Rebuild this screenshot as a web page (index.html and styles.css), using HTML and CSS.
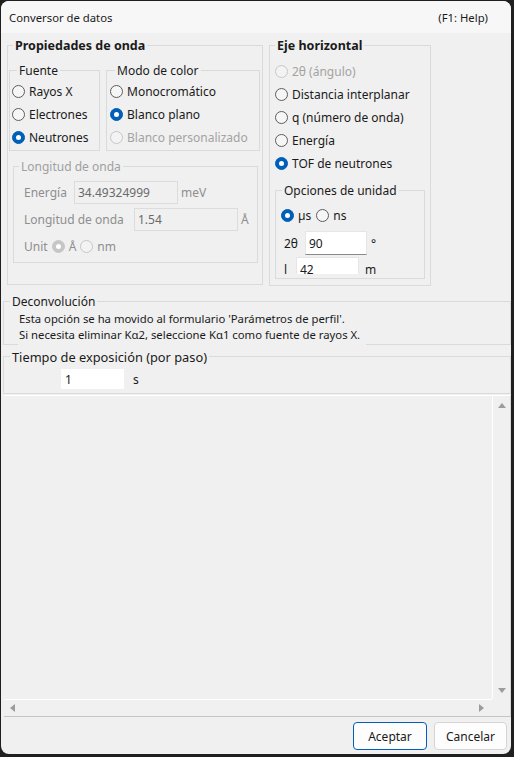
FILE: index.html
```html
<!DOCTYPE html>
<html lang="es">
<head>
    <meta charset="UTF-8">
    <meta name="viewport" content="width=device-width, initial-scale=1.0">
    <title>Conversor de datos</title>
    <link rel="stylesheet" href="styles.css">
</head>
<body>
    <div class="window">
        <header class="titlebar">
            <span>Conversor de datos</span>
            <span>(F1: Help)</span>
        </header>

        <main class="content">
            <div class="top">
                <section class="group wave">
                    <div class="legend bold">Propiedades de onda</div>
                    <div class="pair">
                        <section class="group source">
                            <div class="legend">Fuente</div>
                            <label class="opt"><input type="radio" name="source">Rayos X</label>
                            <label class="opt"><input type="radio" name="source">Electrones</label>
                            <label class="opt"><input type="radio" name="source" checked>Neutrones</label>
                        </section>
                        <section class="group colour">
                            <div class="legend">Modo de color</div>
                            <label class="opt"><input type="radio" name="colour">Monocromático</label>
                            <label class="opt"><input type="radio" name="colour" checked>Blanco plano</label>
                            <label class="opt off"><input type="radio" name="colour" disabled>Blanco personalizado</label>
                        </section>
                    </div>
                    <section class="group wavelength off">
                        <div class="legend">Longitud de onda</div>
                        <div class="field first">
                            <span class="lbl-energy">Energía</span>
                            <input class="txt" type="text" value="34.49324999" disabled>
                            <span class="unit">meV</span>
                        </div>
                        <div class="field">
                            <span class="lbl-wave">Longitud de onda</span>
                            <input class="txt" type="text" value="1.54" disabled>
                            <span class="unit">Å</span>
                        </div>
                        <div class="field units">
                            <span>Unit</span>
                            <input type="radio" name="wl-unit" checked disabled>
                            <span>Å</span>
                            <input type="radio" name="wl-unit" disabled>
                            <span>nm</span>
                        </div>
                    </section>
                </section>

                <section class="group axis">
                    <div class="legend bold">Eje horizontal</div>
                    <div class="axis-list">
                        <label class="opt off"><input type="radio" name="axis" disabled>2θ (ángulo)</label>
                        <label class="opt"><input type="radio" name="axis">Distancia interplanar</label>
                        <label class="opt"><input type="radio" name="axis">q (número de onda)</label>
                        <label class="opt"><input type="radio" name="axis">Energía</label>
                        <label class="opt"><input type="radio" name="axis" checked>TOF de neutrones</label>
                    </div>
                    <section class="group unit-opts">
                        <div class="legend">Opciones de unidad</div>
                        <div class="unit-body">
                            <div class="tof-row">
                                <label class="opt"><input type="radio" name="tof" checked>µs</label>
                                <label class="opt"><input type="radio" name="tof">ns</label>
                            </div>
                            <div class="param angle">
                                <span class="plbl">2θ</span>
                                <input class="txt" type="text" value="90">
                                <span class="punit">°</span>
                            </div>
                            <div class="param length">
                                <span class="plbl">l</span>
                                <input class="txt" type="text" value="42">
                                <span class="punit">m</span>
                            </div>
                        </div>
                    </section>
                </section>
            </div>

            <section class="group deconv">
                <div class="legend">Deconvolución</div>
                <p class="note">Esta opción se ha movido al formulario 'Parámetros de perfil'.<br>Si necesita eliminar Kα2, seleccione Kα1 como fuente de rayos X.</p>
            </section>

            <section class="group exposure">
                <div class="legend big">Tiempo de exposición (por paso)</div>
                <div class="exp-row">
                    <input class="txt plain" type="text" value="1">
                    <span>s</span>
                </div>
            </section>

            <div class="scroll">
                <div class="view"></div>
                <div class="vbar">
                    <span class="arrow up"></span>
                    <span class="arrow down"></span>
                </div>
                <div class="hbar">
                    <span class="arrow left"></span>
                    <span class="arrow right"></span>
                </div>
            </div>

            <div class="actions">
                <button class="primary">Aceptar</button>
                <button>Cancelar</button>
            </div>
        </main>
    </div>
</body>
</html>
```

FILE: styles.css
```css
body {
    margin: 0;
    background-color: #1f1f1f;
    font-family: "Noto Sans", "DejaVu Sans", sans-serif;
    font-size: 11px;
    color: #1a1a1a;
    height: 757px;
    overflow: hidden;
}
.window {
    margin: 1px 0 0 1px;
    width: 510px;
    height: 753px;
    background-color: #f0f0f0;
    border-radius: 8px;
    overflow: hidden;
}
.titlebar {
    height: 32px;
    background-color: #f7f7f7;
    display: flex;
    justify-content: space-between;
    align-items: center;
    padding: 0 23px 0 8px;
    font-size: 11.3px;
}

/* group boxes */
.group {
    border: 1px solid #dadada;
    box-sizing: border-box;
}
.legend {
    width: fit-content;
    height: 16px;
    line-height: 16px;
    margin: -8px 0 0 6px;
    padding: 0 2px;
    background-color: #f0f0f0;
    font-size: 12px;
}
.bold {
    font-weight: bold;
    font-size: 12.5px;
    margin-left: 5px;
}
.big {
    font-size: 12.8px;
}

/* radio buttons */
input[type="radio"] {
    appearance: none;
    margin: 0;
    width: 13px;
    height: 13px;
    border: 1px solid #5c5c5c;
    border-radius: 50%;
    background-color: #f6f6f6;
    box-sizing: border-box;
    display: grid;
    place-items: center;
    flex: none;
}
input[type="radio"]:checked {
    background-color: #005fb8;
    border-color: #005fb8;
}
input[type="radio"]:checked::after {
    content: "";
    width: 5px;
    height: 5px;
    border-radius: 50%;
    background-color: #fff;
}
input[type="radio"]:disabled {
    border-color: #c6c6c6;
    background-color: #f3f3f3;
}
input[type="radio"]:disabled:checked {
    background-color: #c6c6c6;
}
.opt {
    display: flex;
    align-items: center;
    gap: 4px;
    height: 23px;
    font-size: 12px;
}
.legend + .opt {
    margin-top: 1px;
}
.opt.off {
    color: #a3a3a3;
}

/* text boxes */
.txt {
    box-sizing: border-box;
    margin: 0;
    padding: 0 3px;
    font: inherit;
    color: #1a1a1a;
    background-color: #fff;
    border: 1px solid #e6e6e6;
    border-bottom-color: #8a8a8a;
    outline: none;
}
.txt:disabled {
    background-color: #f0f0f0;
    border-color: #dcdcdc;
    color: #6a6a6a;
}
.txt.plain {
    border-color: #fff;
}

.content {
    font-size: 12px;
}
.top {
    display: flex;
    gap: 6px;
    padding: 12px 0 0 6px;
}

/* wave properties */
.wave {
    width: 256px;
    height: 240px;
}
.pair {
    display: flex;
    gap: 6px;
    margin: 16px 0 0 1px;
}
.source {
    width: 91px;
    height: 81px;
    padding-left: 2px;
}
.colour {
    width: 154px;
    height: 81px;
    padding-left: 3px;
}
.source .legend,
.colour .legend {
    margin-left: 5px;
}
.wavelength {
    width: 245px;
    height: 97px;
    margin: 15px 0 0 5px;
    color: #8e8e8e;
}
.wavelength .legend {
    margin-left: 5px;
    color: #a0a0a0;
}
.field {
    display: flex;
    align-items: center;
    padding-left: 10px;
    margin-top: 4px;
}
.field.first {
    margin-top: 6px;
}
.field .txt {
    width: 104px;
    height: 23px;
}
.lbl-energy {
    width: 50px;
}
.lbl-wave {
    width: 110px;
}
.field .unit {
    margin-left: 3px;
}
.units {
    height: 22px;
    gap: 4px;
}

/* horizontal axis */
.axis {
    width: 162px;
    height: 241px;
}
.axis-list {
    margin-top: 6px;
    padding-left: 5px;
}
.unit-opts {
    width: 150px;
    height: 89px;
    margin: 15px 0 0 5px;
}
.unit-body {
    height: 70px;
    margin-top: 5px;
    padding-left: 5px;
    overflow: hidden;
}
.tof-row {
    display: flex;
    gap: 5px;
}
.param {
    display: flex;
    align-items: center;
    padding-left: 3px;
}
.param .txt {
    height: 24px;
}
.angle {
    margin-top: 4px;
}
.angle .plbl {
    width: 21px;
}
.angle .txt {
    width: 62px;
}
.angle .punit {
    margin-left: 4px;
}
.length {
    margin-top: 2px;
}
.length .plbl {
    width: 12px;
}
.length .txt {
    width: 63px;
}
.length .punit {
    margin-left: 6px;
}

/* deconvolution note */
.deconv {
    width: 508px;
    height: 44px;
    margin: 15px 0 0 2px;
}
.note {
    width: fit-content;
    margin: 1px 0 0 14px;
    padding: 0 6px 3px 1px;
    line-height: 16px;
    font-size: 11.3px;
    background-color: #f0f0f0;
}

/* exposure */
.exposure {
    width: 508px;
    height: 38px;
    margin: 11px 0 0 2px;
}
.exp-row {
    display: flex;
    align-items: center;
    margin: 4px 0 0 57px;
}
.exp-row .txt {
    width: 63px;
    height: 20px;
}
.exp-row span {
    margin-left: 9px;
}

/* empty scroll view */
.scroll {
    width: 507px;
    height: 322px;
    margin: 1px 0 0 3px;
    box-sizing: border-box;
    border-top: 1px solid #fff;
    border-right: 1px solid #d6d6d6;
    border-bottom: 1px solid #c4c4c4;
    display: grid;
    grid-template-columns: 1fr 18px;
    grid-template-rows: 1fr 17px;
}
.vbar {
    border-left: 1px solid #fff;
    display: flex;
    flex-direction: column;
    justify-content: space-between;
    align-items: center;
    padding: 7px 0 6px;
}
.hbar {
    border-top: 1px solid #fff;
    display: flex;
    justify-content: space-between;
    align-items: center;
    padding: 0 8px 0 6px;
}
.arrow {
    width: 0;
    height: 0;
    border: 4px solid transparent;
}
.arrow.up {
    border-bottom: 5px solid #9c9c9c;
    border-top-width: 0;
}
.arrow.down {
    border-top: 5px solid #9c9c9c;
    border-bottom-width: 0;
}
.arrow.left {
    border-right: 5px solid #9c9c9c;
    border-left-width: 0;
}
.arrow.right {
    border-left: 5px solid #9c9c9c;
    border-right-width: 0;
}

/* dialog buttons */
.actions {
    display: flex;
    justify-content: flex-end;
    gap: 7px;
    margin-top: 5px;
    padding-right: 4px;
}
button {
    height: 28px;
    width: 73px;
    font: inherit;
    color: #1a1a1a;
    background-color: #fdfdfd;
    border: 1px solid #d4d4d4;
    border-radius: 4px;
}
button.primary {
    width: 74px;
    border-color: #005fb8;
}
```
